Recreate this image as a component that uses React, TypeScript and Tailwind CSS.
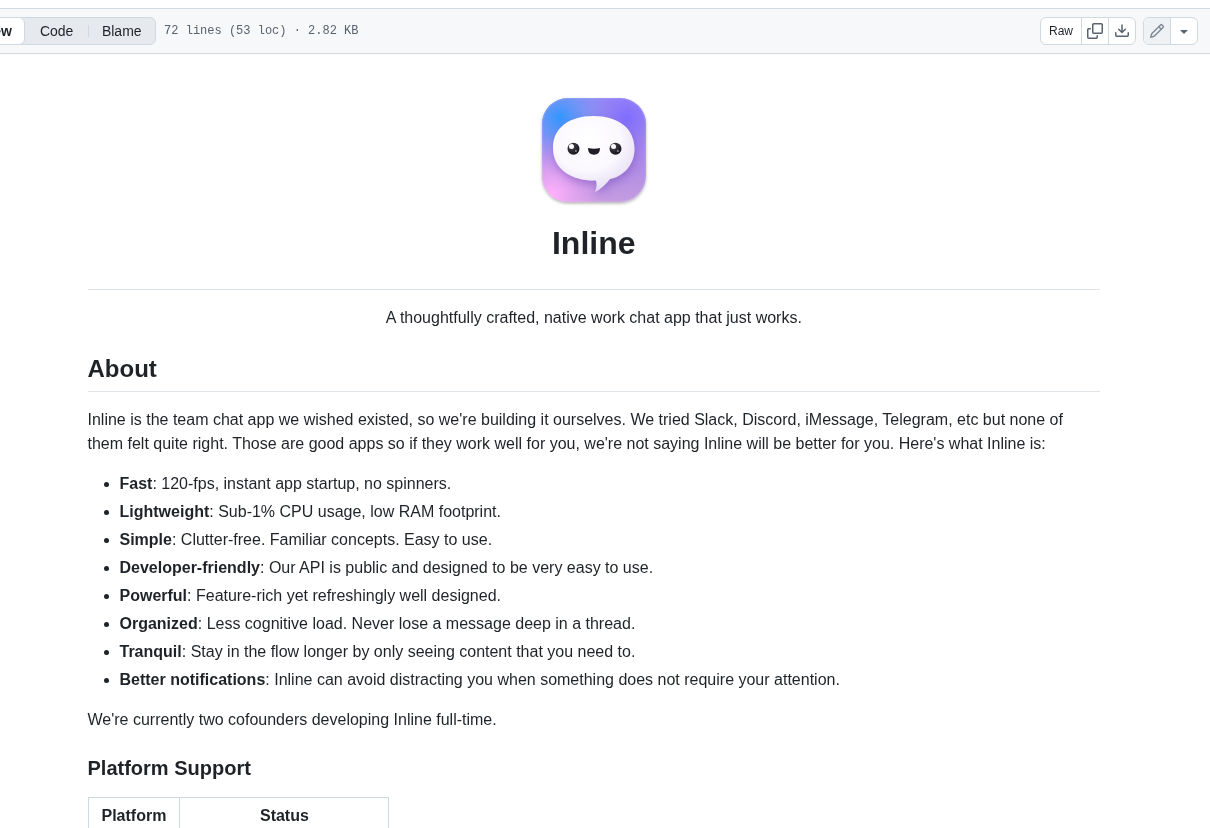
const features = [
  ["Fast", ": 120-fps, instant app startup, no spinners."],
  ["Lightweight", ": Sub-1% CPU usage, low RAM footprint."],
  ["Simple", ": Clutter-free. Familiar concepts. Easy to use."],
  ["Developer-friendly", ": Our API is public and designed to be very easy to use."],
  ["Powerful", ": Feature-rich yet refreshingly well designed."],
  ["Organized", ": Less cognitive load. Never lose a message deep in a thread."],
  ["Tranquil", ": Stay in the flow longer by only seeing content that you need to."],
  ["Better notifications", ": Inline can avoid distracting you when something does not require your attention."],
];

function Icon({ d }: { d: string }) {
  return (
    <svg width="16" height="16" viewBox="0 0 16 16" fill="currentColor">
      <path d={d} />
    </svg>
  );
}

const copyPath =
  "M0 6.75C0 5.784.784 5 1.75 5h1.5a.75.75 0 0 1 0 1.5h-1.5a.25.25 0 0 0-.25.25v7.5c0 .138.112.25.25.25h7.5a.25.25 0 0 0 .25-.25v-1.5a.75.75 0 0 1 1.5 0v1.5A1.75 1.75 0 0 1 9.25 16h-7.5A1.75 1.75 0 0 1 0 14.25Z M5 1.75C5 .784 5.784 0 6.75 0h7.5C15.216 0 16 .784 16 1.75v7.5A1.75 1.75 0 0 1 14.25 11h-7.5A1.75 1.75 0 0 1 5 9.25Zm1.75-.25a.25.25 0 0 0-.25.25v7.5c0 .138.112.25.25.25h7.5a.25.25 0 0 0 .25-.25v-7.5a.25.25 0 0 0-.25-.25Z";
const downloadPath =
  "M2.75 14A1.75 1.75 0 0 1 1 12.25v-2.5a.75.75 0 0 1 1.5 0v2.5c0 .138.112.25.25.25h10.5a.25.25 0 0 0 .25-.25v-2.5a.75.75 0 0 1 1.5 0v2.5A1.75 1.75 0 0 1 13.25 14Z M7.25 7.689V2a.75.75 0 0 1 1.5 0v5.689l1.97-1.969a.749.749 0 1 1 1.06 1.06l-3.25 3.25a.749.749 0 0 1-1.06 0L4.22 6.78a.749.749 0 1 1 1.06-1.06l1.97 1.969Z";
const pencilPath =
  "M11.013 1.427a1.75 1.75 0 0 1 2.474 0l1.086 1.086a1.75 1.75 0 0 1 0 2.474l-8.61 8.61c-.21.21-.47.364-.756.445l-3.251.93a.75.75 0 0 1-.927-.928l.929-3.25c.081-.286.235-.547.445-.758l8.61-8.61Zm.176 4.823L9.75 4.81l-6.286 6.287a.253.253 0 0 0-.064.108l-.558 1.953 1.953-.558a.253.253 0 0 0 .108-.064Zm1.238-3.763a.25.25 0 0 0-.354 0L10.811 3.75l1.439 1.44 1.263-1.263a.25.25 0 0 0 0-.354Z";
const caretPath =
  "m4.427 7.427 3.396 3.396a.25.25 0 0 0 .354 0l3.396-3.396A.25.25 0 0 0 11.396 7H4.604a.25.25 0 0 0-.177.427Z";

function Logo() {
  return (
    <svg width="128" height="128" viewBox="0 0 128 128">
      <defs>
        <linearGradient id="base" x1="0" y1="0" x2="0" y2="1">
          <stop offset="0" stopColor="#9a8af7" />
          <stop offset="0.55" stopColor="#a988e8" />
          <stop offset="1" stopColor="#c49ce0" />
        </linearGradient>
        <radialGradient id="blue" cx="17%" cy="19%" r="52%">
          <stop offset="0" stopColor="#2f97ff" />
          <stop offset="0.45" stopColor="#6a98f6" stopOpacity="0.72" />
          <stop offset="1" stopColor="#8a86f0" stopOpacity="0" />
        </radialGradient>
        <radialGradient id="violet" cx="82%" cy="19%" r="36%">
          <stop offset="0" stopColor="#7f6dff" />
          <stop offset="1" stopColor="#8a74f5" stopOpacity="0" />
        </radialGradient>
        <radialGradient id="pink" cx="10%" cy="92%" r="55%">
          <stop offset="0" stopColor="#ffb0fc" />
          <stop offset="1" stopColor="#e4a4f0" stopOpacity="0" />
        </radialGradient>
        <radialGradient id="bubble" cx="42%" cy="32%" r="74%">
          <stop offset="0" stopColor="#ffffff" />
          <stop offset="0.55" stopColor="#fbf8fe" />
          <stop offset="0.85" stopColor="#e9e2f6" />
          <stop offset="1" stopColor="#d3c6ee" />
        </radialGradient>
        <radialGradient id="eye" cx="35%" cy="30%" r="75%">
          <stop offset="0" stopColor="#4a4650" />
          <stop offset="1" stopColor="#15131a" />
        </radialGradient>
        <filter id="shadow" x="-10%" y="-10%" width="120%" height="125%">
          <feDropShadow dx="0" dy="1.5" stdDeviation="1.5" floodColor="#000000" floodOpacity="0.3" />
        </filter>
        <filter id="soft">
          <feGaussianBlur stdDeviation="0.5" />
        </filter>
        <filter id="bubbleShadow" x="-15%" y="-15%" width="130%" height="135%">
          <feDropShadow dx="1" dy="4" stdDeviation="4" floodColor="#6b3fb5" floodOpacity="0.45" />
        </filter>
        <clipPath id="tile">
          <rect x="12" y="12" width="104" height="104" rx="26" />
        </clipPath>
      </defs>
      <g filter="url(#shadow)">
        <rect x="12" y="12" width="104" height="104" rx="26" fill="url(#base)" />
      </g>
      <g clipPath="url(#tile)">
        <g filter="url(#soft)">
          <rect x="12" y="12" width="104" height="104" fill="url(#violet)" />
          <rect x="12" y="12" width="104" height="104" fill="url(#blue)" />
          <rect x="12" y="12" width="104" height="104" fill="url(#pink)" />
        </g>
        <rect x="12.5" y="12.5" width="103" height="103" rx="25.5" fill="none" stroke="#ffffff" strokeOpacity="0.1" strokeWidth="1.5" filter="url(#soft)" />
      </g>
      <g filter="url(#soft)">
        {/* speech bubble with its tail */}
        <g filter="url(#bubbleShadow)">
          <path
            d="M63.5 30 C88 30 104.5 42 104.5 63 C104.5 80 92 91 80 93 C76 98 71 103 65 106 C67 101 67 97 66 94.5 C64 94.6 62 94.6 60 94.5 C38 93 23 81 23 62 C23 42 39 30 63.5 30 Z"
            fill="url(#bubble)"
          />
        </g>
        <circle cx="43.5" cy="62.7" r="6" fill="url(#eye)" />
        <circle cx="41.5" cy="60.6" r="2.5" fill="#ffffff" />
        <circle cx="45.9" cy="65" r="1" fill="#8d8a94" />
        <circle cx="85.5" cy="62.7" r="6" fill="url(#eye)" />
        <circle cx="83.5" cy="60.6" r="2.5" fill="#ffffff" />
        <circle cx="87.9" cy="65" r="1" fill="#8d8a94" />
        <path d="M58 62 Q64 63.5 70 62 Q70 68.8 64 68.8 Q58 68.8 58 62 Z" fill="#211e27" />
      </g>
    </svg>
  );
}

export default function App() {
  return (
    <div className="h-[828px] overflow-hidden will-change-transform pt-2 text-[#1f2328] font-['Liberation_Sans',Arial,sans-serif]">
      {/* file toolbar */}
      <div className="h-[46px] flex items-center justify-between border-y border-[#d1d9e0] bg-[#f6f8fa] pr-3">
        <div className="flex items-center">
          <div className="ml-[-54px] h-7 flex items-center rounded-md border border-[#d1d9e0] bg-[#e6eaef] text-sm">
            <span className="h-7 -my-px -ml-px flex items-center rounded-md border border-[#d1d9e0] bg-white px-3 font-bold">Preview</span>
            <span className="pl-[15px] pr-[15px]">Code</span>
            <span className="h-3 w-px bg-[#d1d9e0]" />
            <span className="pl-[12.5px] pr-[13.5px]">Blame</span>
          </div>
          <span className="ml-2 text-xs text-[#59636e] font-['Liberation_Mono',monospace]">72 lines (53 loc) · 2.82 KB</span>
        </div>
        <div className="flex items-center gap-[7px]">
          <div className="h-7 flex items-center rounded-md border border-[#d1d9e0] bg-white">
            <span className="w-10 text-center text-xs">Raw</span>
            <span className="h-full w-[27px] flex items-center justify-center border-l border-[#d1d9e0] text-[#59636e]"><Icon d={copyPath} /></span>
            <span className="h-full w-[27px] flex items-center justify-center border-l border-[#d1d9e0] text-[#59636e]"><Icon d={downloadPath} /></span>
          </div>
          <div className="h-7 flex items-center rounded-md border border-[#d1d9e0] bg-white">
            <span className="h-full w-[26px] flex items-center justify-center rounded-l-md bg-[#eff2f5] text-[#818b98]"><Icon d={pencilPath} /></span>
            <span className="h-full w-[27px] flex items-center justify-center border-l border-[#d1d9e0] text-[#59636e]"><Icon d={caretPath} /></span>
          </div>
        </div>
      </div>

      {/* readme */}
      <article className="ml-[87.5px] w-[1012.5px] text-base leading-6">
        <div className="pt-8 flex justify-center">
          <Logo />
        </div>
        <h1 className="mt-[9px] pb-[26px] border-b border-[#d1d9e0b3] text-center text-[32px] leading-10 font-bold">Inline</h1>
        <p className="mt-4 text-center">A thoughtfully crafted, native work chat app that just works.</p>
        <h2 className="mt-6 pb-[7px] border-b border-[#d1d9e0b3] text-2xl leading-[30px] font-bold">About</h2>
        <p className="mt-4">
          Inline is the team chat app we wished existed, so we're building it ourselves. We tried Slack, Discord, iMessage, Telegram, etc but none of them felt quite right. Those are good apps so if they work well for you, we're not saying Inline will be better for you. Here's what Inline is:
        </p>
        <ul className="mt-4 pl-8 list-disc flex flex-col gap-1">
          {features.map(([name, rest]) => (
            <li key={name}>
              <strong className="font-bold">{name}</strong>
              {rest}
            </li>
          ))}
        </ul>
        <p className="mt-4">We're currently two cofounders developing Inline full-time.</p>
        <h3 className="mt-6 text-xl leading-[25px] font-bold">Platform Support</h3>
        <table className="mt-4 border-collapse">
          <thead>
            <tr>
              <th className="w-[91.5px] border border-[#d1d9e0] px-[13px] py-[6px] font-bold">Platform</th>
              <th className="w-[209px] border border-[#d1d9e0] px-[13px] py-[6px] font-bold">Status</th>
            </tr>
          </thead>
        </table>
      </article>
    </div>
  );
}
